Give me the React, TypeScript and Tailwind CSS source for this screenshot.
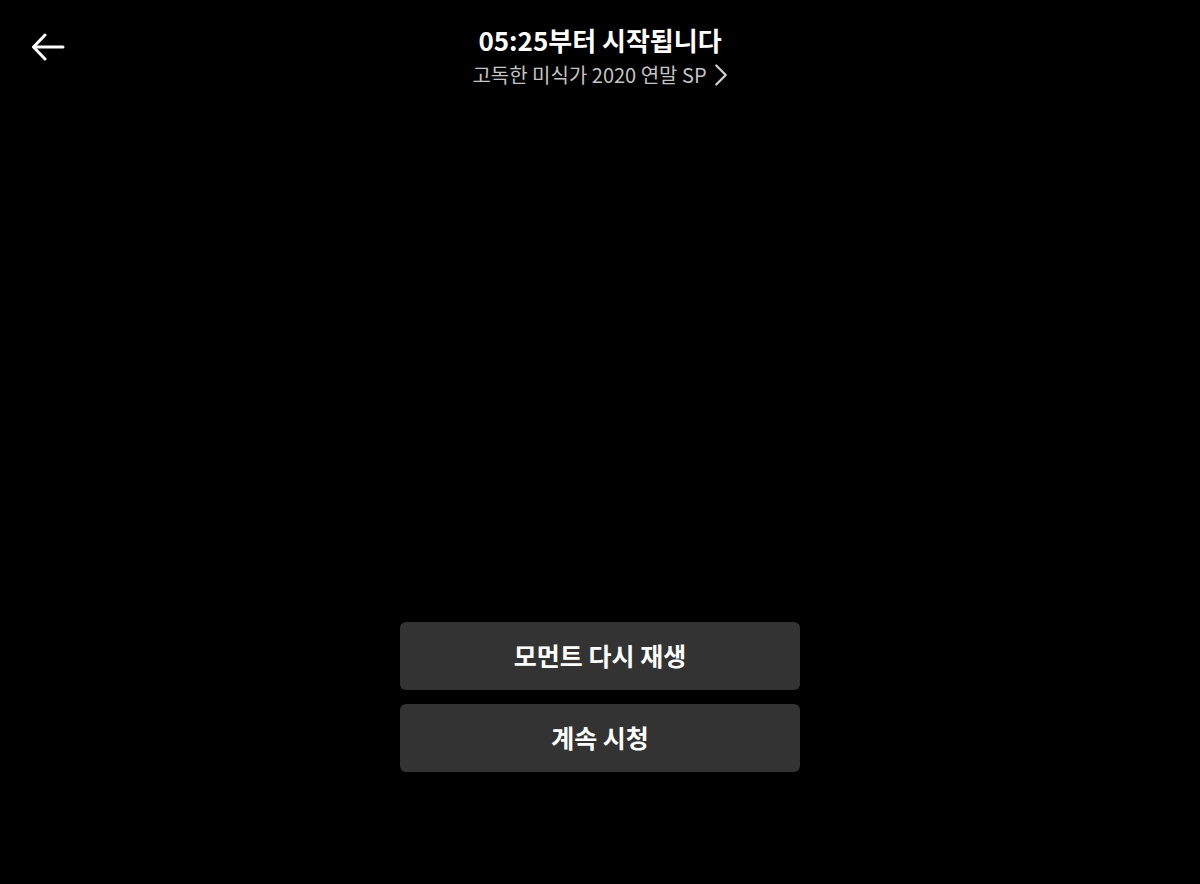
import { ChevronRight } from 'lucide-react'

const font = { fontFamily: '"Noto Sans CJK KR", "Noto Sans", sans-serif' }

function BackArrow() {
  return (
    <svg width="34" height="28" viewBox="0 0 34 28" fill="none" stroke="white" strokeWidth="3" strokeLinecap="round" strokeLinejoin="round">
      <path d="M32 14H3" />
      <path d="M14 2L2.5 14L14 26" />
    </svg>
  )
}

export default function App() {
  return (
    <div className="flex h-[884px] w-[1200px] flex-col bg-black text-white" style={font}>
      <header className="relative flex flex-col items-center pt-[22px]">
        <button className="absolute left-[31px] top-[33px]">
          <BackArrow />
        </button>
        <h1 className="text-[26px] font-bold leading-[36px]">05:25부터 시작됩니다</h1>
        <div className="mt-[4px] flex items-center text-[20px] leading-[26px] text-[#c4c4c4]">
          <span>고독한 미식가 2020 연말 SP</span>
          <ChevronRight size={38} strokeWidth={1.4} className="-my-[6px] -mr-[12px] -ml-[5px] text-[#d0d0d0]" />
        </div>
      </header>

      <div className="flex flex-1 flex-col items-center justify-end gap-[14px] pb-[112px]">
        <button className="h-[68px] w-[400px] rounded-[6px] bg-[#333333] text-[25px] font-bold">모먼트 다시 재생</button>
        <button className="h-[68px] w-[400px] rounded-[6px] bg-[#333333] text-[25px] font-bold">계속 시청</button>
      </div>
    </div>
  )
}
